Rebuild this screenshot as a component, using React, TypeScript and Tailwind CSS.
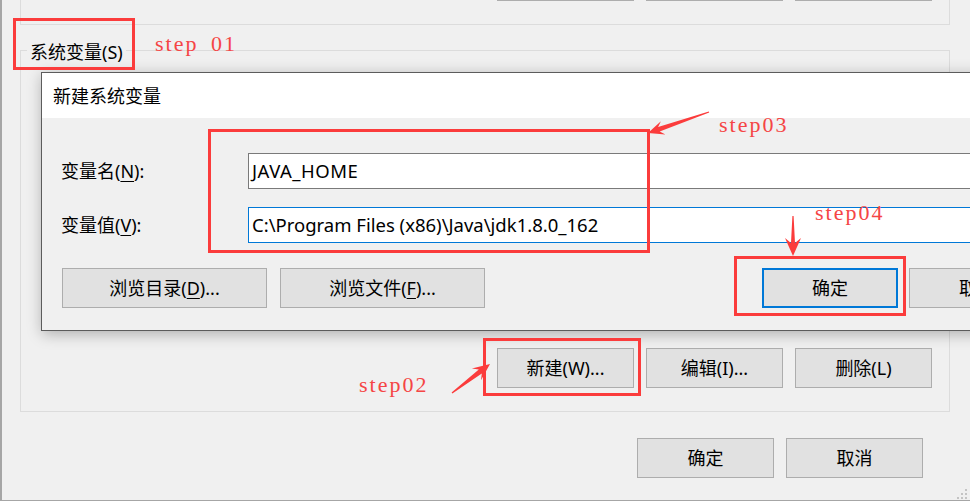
import React from 'react';

type Pt = [number, number];

const ui = "font-['Noto_Sans','Noto_Sans_CJK_SC',sans-serif]";

// tapered screenshot-tool arrow, thin at the tail, head at the tip
function arrowPoints(tail: Pt, tip: Pt, headLen: number, headW: number, shaftW: number) {
  const dx = tip[0] - tail[0];
  const dy = tip[1] - tail[1];
  const len = Math.hypot(dx, dy);
  const ux = dx / len;
  const uy = dy / len;
  const nx = -uy;
  const ny = ux;
  const base: Pt = [tip[0] - ux * headLen * 0.72, tip[1] - uy * headLen * 0.72];
  const wing: Pt = [tip[0] - ux * headLen, tip[1] - uy * headLen];
  const pts: Pt[] = [
    [tail[0] + nx * 0.6, tail[1] + ny * 0.6],
    [base[0] + (nx * shaftW) / 2, base[1] + (ny * shaftW) / 2],
    [wing[0] + (nx * headW) / 2, wing[1] + (ny * headW) / 2],
    tip,
    [wing[0] - (nx * headW) / 2, wing[1] - (ny * headW) / 2],
    [base[0] - (nx * shaftW) / 2, base[1] - (ny * shaftW) / 2],
    [tail[0] - nx * 0.6, tail[1] - ny * 0.6],
  ];
  return pts.map((p) => `${p[0].toFixed(1)},${p[1].toFixed(1)}`).join(' ');
}

const Btn: React.FC<{ className?: string; children: React.ReactNode }> = ({ className = '', children }) => (
  <button
    type="button"
    className={`h-[40px] flex items-center justify-center bg-[#e1e1e1] text-[18px] leading-none text-black ${className}`}
  >
    {children}
  </button>
);

const StepLabel: React.FC<{ className: string; children: React.ReactNode }> = ({ className, children }) => (
  <div
    className={`absolute font-['Liberation_Serif',serif] text-[22px] leading-none tracking-[2px] [word-spacing:5px] text-[#f54545] whitespace-pre ${className}`}
  >
    {children}
  </div>
);

const App: React.FC = () => {
  return (
    <div className={`relative w-[970px] h-[501px] overflow-hidden bg-[#f0f0f0] text-black ${ui}`}>
      {/* environment variables window behind */}
      <div className="h-[501px] border-l-2 border-b border-[#a6a6a6] flex flex-col">
        <div className="ml-[18px] w-[930px] h-[25px] shrink-0 border-x border-b border-[#dcdcdc] flex justify-end gap-[12px] pr-[17px]">
          <div className="w-[137px] h-px bg-[#adadad]" />
          <div className="w-[137px] h-px bg-[#adadad]" />
          <div className="w-[137px] h-px bg-[#adadad]" />
        </div>

        <fieldset className="ml-[18px] mt-[13px] w-[930px] border border-[#dcdcdc]">
          <legend className="ml-[6px] px-[3px] pt-[3px] text-[18px] leading-[22px]">系统变量(S)</legend>
          <div className="h-[348px] flex items-end justify-end gap-[12px] pr-[17px] pb-[23px]">
            <Btn className="w-[137px] border border-[#adadad]">新建(W)...</Btn>
            <Btn className="w-[137px] border border-[#adadad]">编辑(I)...</Btn>
            <Btn className="w-[137px] border border-[#adadad]">删除(L)</Btn>
          </div>
        </fieldset>

        <div className="mt-[26px] flex justify-end gap-[12px] pr-[47px]">
          <Btn className="w-[137px] border border-[#adadad]">确定</Btn>
          <Btn className="w-[137px] border border-[#adadad]">取消</Btn>
        </div>
      </div>

      {/* new system variable dialog */}
      <div className="absolute left-[41px] top-[72px] w-[1030px] h-[259px] border border-[#5c5c5c] bg-[#f0f0f0] shadow-[1px_3px_14px_rgba(0,0,0,0.28)] flex flex-col">
        <div className="h-[45px] shrink-0 bg-white flex items-center pl-[11px] text-[18px] leading-none">新建系统变量</div>
        <div className="pt-[35px] pl-[19px] flex flex-col">
          <div className="h-[36px] flex items-center">
            <div className="w-[187px] text-[18px] leading-none">
              变量名(<u className="underline-offset-[3px]">N</u>):
            </div>
            <div className="h-[36px] w-[800px] border border-[#7a7a7a] bg-white flex items-center pl-[3px] text-[18.5px] tracking-[0.5px] leading-none">
              JAVA_HOME
            </div>
          </div>
          <div className="mt-[18px] h-[36px] flex items-center">
            <div className="w-[187px] text-[18px] leading-none">
              变量值(<u className="underline-offset-[3px]">V</u>):
            </div>
            <div className="h-[36px] w-[800px] border border-[#0078d7] bg-white flex items-center pl-[3px] text-[18.5px] leading-none">
              C:\Program Files (x86)\Java\jdk1.8.0_162
            </div>
          </div>
          <div className="mt-[25px] pl-px flex">
            <Btn className="w-[205px] border border-[#adadad]">
              浏览目录(<u className="underline-offset-[3px]">D</u>)...
            </Btn>
            <Btn className="ml-[13px] w-[205px] border border-[#adadad]">
              浏览文件(<u className="underline-offset-[3px]">F</u>)...
            </Btn>
            <Btn className="ml-[277px] w-[136px] border-2 border-[#0078d7]">确定</Btn>
            <Btn className="ml-[11px] w-[136px] border border-[#adadad]">取消</Btn>
          </div>
        </div>
      </div>

      {/* annotations */}
      <div className="absolute left-[13px] top-[18px] w-[122px] h-[52px] border-[3px] border-[#fb3c3c]" />
      <div className="absolute left-[208px] top-[129px] w-[442px] h-[124px] border-[3px] border-[#fb3c3c]" />
      <div className="absolute left-[734px] top-[256px] w-[172px] h-[60px] border-[3px] border-[#fb3c3c]" />
      <div className="absolute left-[483px] top-[338px] w-[158px] h-[58px] border-[3px] border-[#fb3c3c]" />

      <StepLabel className="left-[155px] top-[33px]">step 01</StepLabel>
      <StepLabel className="left-[719px] top-[114px]">step03</StepLabel>
      <StepLabel className="left-[815px] top-[202px]">step04</StepLabel>
      <StepLabel className="left-[359px] top-[374px]">step02</StepLabel>

      <svg className="absolute left-0 top-0 pointer-events-none" width="970" height="501" viewBox="0 0 970 501">
        <polygon points={arrowPoints([709, 112], [648, 133], 16, 14, 5)} fill="#fb3c3c" />
        <polygon points={arrowPoints([793, 216], [793, 256], 18, 16, 4)} fill="#fb3c3c" />
        <polygon points={arrowPoints([452, 393], [490, 364], 17, 15, 5)} fill="#fb3c3c" />
        {/* size grip */}
        <g fill="#c4c4c4">
          <rect x="965" y="489" width="2" height="2" />
          <rect x="961" y="493" width="2" height="2" />
          <rect x="965" y="493" width="2" height="2" />
          <rect x="957" y="497" width="2" height="2" />
          <rect x="961" y="497" width="2" height="2" />
          <rect x="965" y="497" width="2" height="2" />
        </g>
      </svg>
    </div>
  );
};

export default App;
